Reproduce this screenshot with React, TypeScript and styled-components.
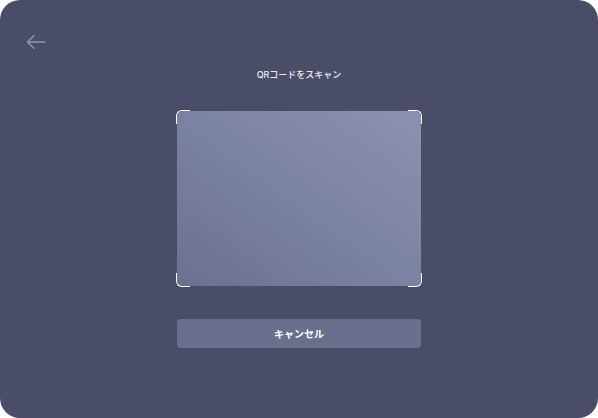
import React from 'react';
import styled, { createGlobalStyle } from 'styled-components';

const GlobalStyle = createGlobalStyle`
  html, body {
    margin: 0;
    padding: 0;
    background: #ffffff;
  }
  body {
    font-family: "Inter", "Noto Sans CJK JP", sans-serif;
  }
`;

const Panel = styled.div`
  width: 598px;
  height: 418px;
  box-sizing: border-box;
  background-color: #494d68;
  border-radius: 20px;
  display: flex;
  flex-direction: column;
  align-items: center;
  padding-top: 34px;
  overflow: hidden;
`;

const TopBar = styled.div`
  align-self: stretch;
  display: flex;
  align-items: center;
  padding-left: 26px;
  height: 15px;
`;

const BackButton = styled.button`
  display: flex;
  padding: 0;
  border: none;
  background: none;
  cursor: pointer;
  color: #9397b0;
`;

const Title = styled.h1`
  margin: 20px 0 0;
  font-size: 9px;
  line-height: 12px;
  font-weight: 500;
  color: #e9eaf0;
`;

const ScanArea = styled.div`
  position: relative;
  margin-top: 30px;
  width: 244px;
  height: 175px;
  border-radius: 6px;
  background: linear-gradient(to top right, #6b7090 0%, #7c82a1 50%, #8b91ae 100%);
`;

const Corner = styled.span<{ $v: 'top' | 'bottom'; $h: 'left' | 'right' }>`
  position: absolute;
  width: 13px;
  height: 13px;
  ${(p) => p.$v}: -1px;
  ${(p) => p.$h}: -1px;
  border-${(p) => p.$v}: 1.5px solid #ffffff;
  border-${(p) => p.$h}: 1.5px solid #ffffff;
  border-${(p) => p.$v}-${(p) => p.$h}-radius: 6px;
`;

const CancelButton = styled.button`
  margin-top: 33px;
  width: 244px;
  height: 29px;
  border: none;
  border-radius: 4px;
  background-color: #6b6f8e;
  color: #ffffff;
  font-family: "Inter", "Noto Sans CJK JP", sans-serif;
  font-size: 10px;
  font-weight: 700;
  cursor: pointer;
`;

function BackArrow() {
  return (
    <svg width="20" height="16" viewBox="0 0 20 16" fill="none">
      <path
        d="M19 8H1.5M8 1.5L1.5 8L8 14.5"
        stroke="currentColor"
        strokeWidth="1.3"
        strokeLinecap="round"
        strokeLinejoin="round"
      />
    </svg>
  );
}

export default function App() {
  return (
    <>
      <GlobalStyle />
      <Panel>
        <TopBar>
          <BackButton aria-label="戻る">
            <BackArrow />
          </BackButton>
        </TopBar>
        <Title>QRコードをスキャン</Title>
        <ScanArea>
          <Corner $v="top" $h="left" />
          <Corner $v="top" $h="right" />
          <Corner $v="bottom" $h="left" />
          <Corner $v="bottom" $h="right" />
        </ScanArea>
        <CancelButton>キャンセル</CancelButton>
      </Panel>
    </>
  );
}
